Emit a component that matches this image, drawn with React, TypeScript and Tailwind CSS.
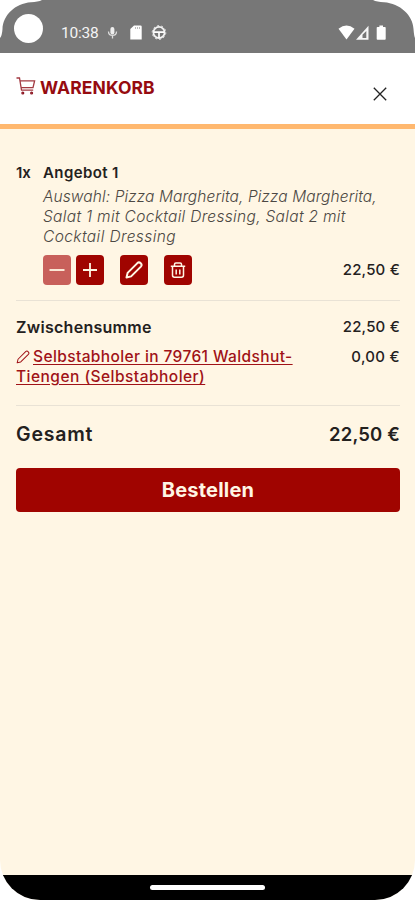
import React from "react";

function CartIcon() {
  return (
    <svg width="20" height="20" viewBox="0 0 20 20" fill="none" stroke="#a23a42" strokeWidth="1.3" className="shrink-0">
      <path d="M.5 2h3l2 12.200h11.700M4 4.800h14.600l-1.600 6.900H5.300" />
      <circle cx="6.800" cy="17" r=".9" stroke="#8c1420" />
      <circle cx="15.600" cy="17" r=".9" stroke="#8c1420" />
    </svg>
  );
}

function PencilIcon({ size, width }: { size: number; width: number }) {
  return (
    <svg width={size} height={size} viewBox="0 0 18 18" fill="none" stroke="currentColor" strokeWidth={width} strokeLinejoin="round" className="shrink-0">
      <path d="M1.500 16.500l1.100-4.600L12.400 2.100c2.200-2 5.500 1.300 3.500 3.500L6.100 15.400z" />
    </svg>
  );
}

function TrashIcon() {
  return (
    <svg width="16" height="18" viewBox="0 0 16 18" fill="none" stroke="currentColor" strokeWidth="1.500" strokeLinejoin="round">
      <path d="M.8 5.300h14.400M4.500 5V3.300c0-.9.500-1.300 1.400-1.300h4.200c.9 0 1.400.4 1.400 1.300V5M2.500 5.500v8.800c0 1.200.7 1.900 1.900 1.900h7.200c1.200 0 1.900-.7 1.900-1.900V5.500M6.200 8.500v5M9.800 8.500v5" />
    </svg>
  );
}

function StatusBar() {
  return (
    <div className="relative flex h-[53px] items-start bg-[#777777] pl-[14px] pr-[28px]">
      <svg width="44" height="40" viewBox="0 0 44 40" fill="#fff" className="absolute left-0 top-0">
        <path d="M0 0H42Q38 2 31 2.200C15 3.500 3 15 2.500 29Q2 36 0 38z" />
      </svg>
      <svg width="44" height="40" viewBox="0 0 44 40" fill="#fff" className="absolute right-0 top-0 -scale-x-100">
        <path d="M0 0H42Q38 2 31 2.200C15 3.500 2 15 1.500 29Q1 36 0 38z" />
      </svg>
      <div className="mt-[14px] size-[29px] rounded-full bg-white" />
      <span className="ml-[18px] mt-[23px] w-[38px] font-[Roboto] text-[15.5px] leading-[20px] tracking-[-0.2px] text-[#f4f4f4]">10:38</span>
      <svg width="70" height="20" viewBox="0 0 70 20" className="ml-[6px] mt-[23px] shrink-0">
        <rect x="5.400" y="4" width="4" height="7.500" rx="2" fill="#eee" />
        <path d="M3.500 8.500c0 5.200 8 5.200 8 0M7.500 12.500v3" fill="none" stroke="#ddd" strokeWidth="1.300" />
        <path d="M29 2.500h6.500q1.200 0 1.200 1.200v12.800H25.300V6z" fill="#fff" />
        <path d="M30.500 4v2M32.500 4v2M34.500 4v2" stroke="#aaa" strokeWidth=".8" />
        <circle cx="54" cy="9.500" r="5.600" fill="none" stroke="#f5f5f5" strokeWidth="1.700" />
        <circle cx="54" cy="9.500" r="6.800" fill="none" stroke="#eee" strokeWidth="1" strokeDasharray="2 2.272" />
        <path d="M49 9.200h10M54 9.500v5.500" stroke="#fff" strokeWidth="1.700" />
      </svg>
      <svg width="50" height="20" viewBox="0 0 50 20" className="ml-auto mt-[23px] shrink-0">
        <path d="M1.500 5.800Q9.500-.8 17.500 5.800L9.500 16.500z" fill="#fff" />
        <path d="M31.500 2.800v13.900H19z" fill="#f7f7f7" />
        <path d="M29.300 8v7h-3.800v-3.200z" fill="#777" />
        <path d="M40.500 4h1.900V2.500h3.600V4h1.900q.8 0 .8.700V16q0 .7-.8.700h-7.400q-.8 0-.8-.7V4.700q0-.7.800-.7z" fill="#fff" />
      </svg>
    </div>
  );
}

export default function App() {
  return (
    <div className="h-[900px] w-[415px] bg-white">
      <div className="flex h-full flex-col overflow-hidden rounded-b-[40px] bg-[#fff6e4] font-['Inter',sans-serif] text-[#24211e]">
        <StatusBar />
        <header className="flex h-[76px] items-start justify-between border-b-[5px] border-[#ffb86f] bg-white pl-4 pr-[28px]">
          <div className="flex pt-[23px]">
            <CartIcon />
            <h1 className="ml-1 whitespace-nowrap text-[17.500px] font-bold leading-[24px] tracking-[0.100px] text-[#960b10]">WARENKORB</h1>
          </div>
          <svg width="14" height="14" viewBox="0 0 14 14" stroke="#222" strokeWidth="1.300" className="mt-[34px]">
            <path d="M.8.8l12.400 12.400M13.200.8L.8 13.200" />
          </svg>
        </header>
        <main className="flex flex-1 flex-col pl-4 pr-[15px]">
          <section className="mt-[33px] flex h-[139px] border-b border-[#e9e2d5]">
            <span className="w-[27px] shrink-0 text-[15px] font-semibold leading-[22px]">1x</span>
            <div className="flex-1">
              <h2 className="whitespace-nowrap text-[15px] font-semibold leading-[22px] tracking-[0.400px]">Angebot 1</h2>
              <p className="mt-[3px] whitespace-nowrap text-[15.500px] font-light italic leading-[20px] text-[#4c4843]">
                <span className="block tracking-[0.100px]">Auswahl: Pizza Margherita, Pizza Margherita,</span>
                <span className="block tracking-[0.320px]">Salat 1 mit Cocktail Dressing, Salat 2 mit</span>
                <span className="block tracking-[0.400px]">Cocktail Dressing</span>
              </p>
              <div className="mt-[8px] flex h-[30px] items-center text-[#fff6e4]">
                <button className="flex h-[30px] w-7 items-center justify-center rounded-[4px] bg-[#c8605b]">
                  <svg width="16" height="16" viewBox="0 0 16 16" stroke="currentColor" strokeWidth="1.800"><path d="M.5 8h15" /></svg>
                </button>
                <button className="ml-[5px] flex h-[30px] w-7 items-center justify-center rounded-[4px] bg-[#a00400]">
                  <svg width="16" height="16" viewBox="0 0 16 16" stroke="currentColor" strokeWidth="1.800"><path d="M1 8h14M8 1v14" /></svg>
                </button>
                <button className="ml-4 flex h-[30px] w-7 items-center justify-center rounded-[4px] bg-[#a00400]"><PencilIcon size={18} width={2} /></button>
                <button className="ml-4 flex h-[30px] w-7 items-center justify-center rounded-[4px] bg-[#a00400]"><TrashIcon /></button>
                <span className="ml-auto whitespace-nowrap text-[15px] font-medium tracking-[0.200px] text-[#24211e]">22,50 €</span>
              </div>
            </div>
          </section>
          <section className="h-[105px] border-b border-[#e9e2d5] pt-[15px] text-[15px]">
            <div className="flex justify-between leading-[22px]">
              <span className="text-[16px] font-semibold tracking-[0.280px]">Zwischensumme</span>
              <span className="font-medium tracking-[0.200px]">22,50 €</span>
            </div>
            <div className="mt-[9px] flex justify-between leading-[20px]">
              <a className="block whitespace-nowrap text-[15.500px] font-medium text-[#a01217]">
                <span className="flex items-center"><PencilIcon size={14} width={1.3} /><span className="ml-[3px] tracking-[0.390px] underline underline-offset-2">Selbstabholer in 79761 Waldshut-</span></span>
                <span className="block tracking-[0.470px] underline underline-offset-2">Tiengen (Selbstabholer)</span>
              </a>
              <span className="whitespace-nowrap font-medium tracking-[0.300px]">0,00 €</span>
            </div>
          </section>
          <div className="mt-[15px] flex justify-between text-[18.500px] font-semibold leading-[26px]">
            <span className="text-[19.500px] tracking-[0.800px]">Gesamt</span>
            <span className="tracking-[0.150px]">22,50 €</span>
          </div>
          <button className="mt-[21px] h-[44px] rounded-[4px] bg-[#a00400] text-[20px] font-bold tracking-[0.200px] text-[#fff6e4]">Bestellen</button>
        </main>
        <footer className="flex h-[25px] justify-center bg-black pt-[10px]">
          <div className="h-[5px] w-[115px] rounded-full bg-white" />
        </footer>
      </div>
    </div>
  );
}
